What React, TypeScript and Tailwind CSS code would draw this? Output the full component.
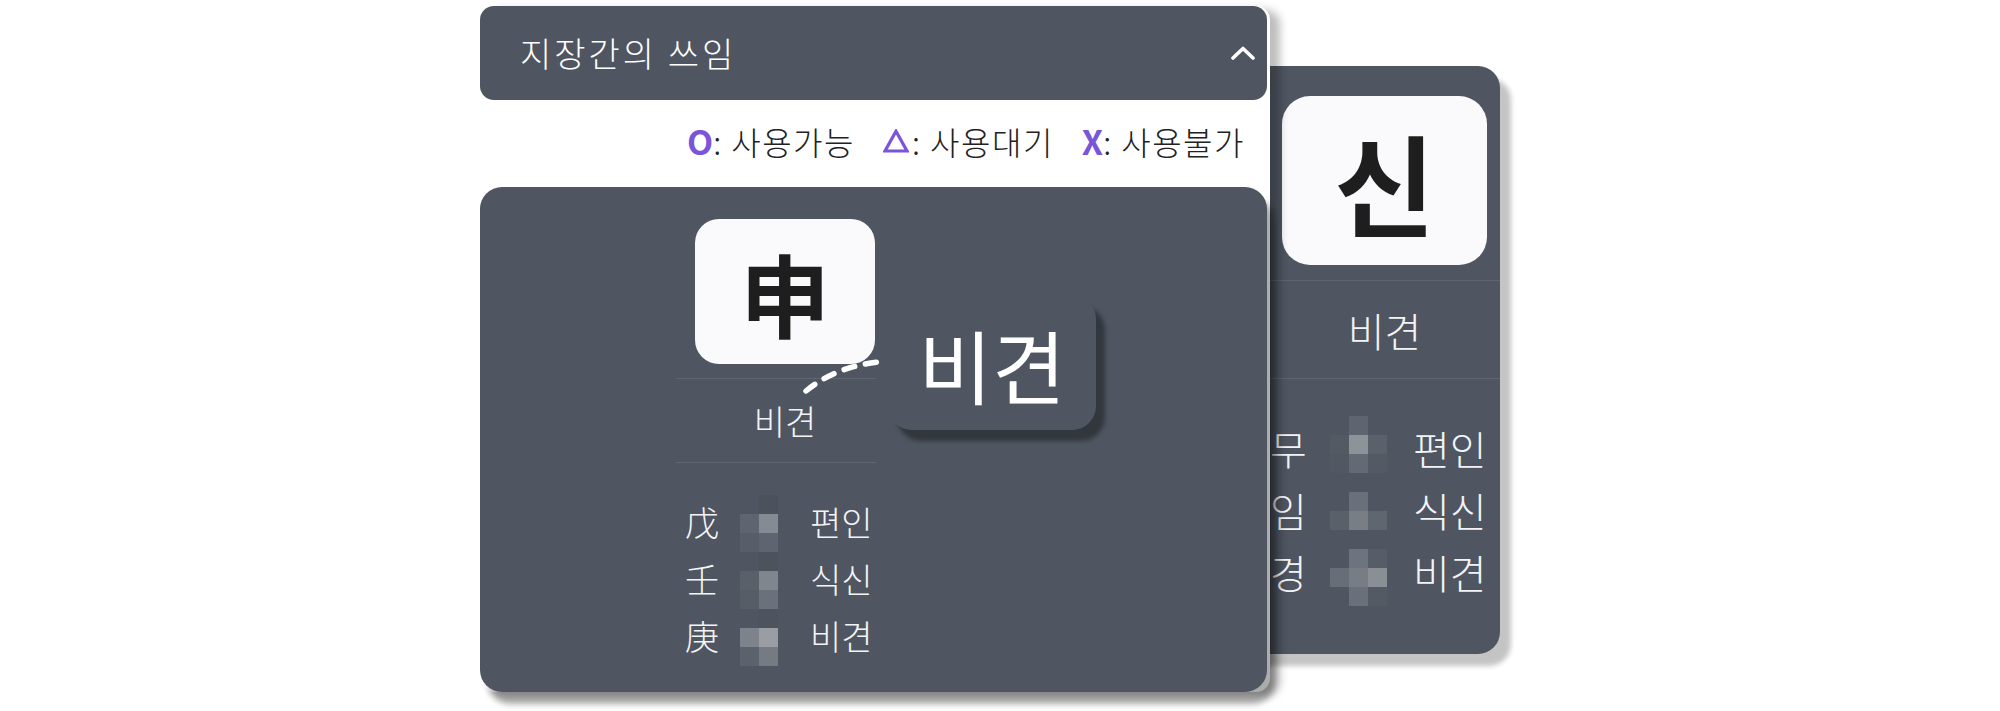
import React from "react";

type Cell = string | null;

const leftMosaic: Cell[][] = [
  [null, "#4b525c"],
  ["#5f6570", "#868b93"],
  ["#585e69", "#5f6570"],
  [null, "#4d535d"],
  ["#5a606a", "#80858e"],
  ["#575d67", "#6b717a"],
  [null, "#4d545e"],
  ["#7d828b", "#9a9ea4"],
  ["#5c626c", "#757a83"],
];

const rightMosaic: Cell[][] = [
  [null, "#5f6570", null],
  ["#535a64", "#8e939a", "#5b616b"],
  ["#525862", "#646a74", "#545a64"],
  [null, null, null],
  [null, "#6a707a", null],
  ["#5a606a", "#787d86", "#60666f"],
  [null, null, null],
  [null, "#6e747d", "#575d67"],
  ["#686e77", "#777c85", "#8a8f96"],
  [null, "#6a7079", "#545a63"],
];

function Mosaic({ data }: { data: Cell[][] }) {
  return (
    <div className="flex flex-col">
      {data.map((row, i) => (
        <div key={i} className="flex">
          {row.map((c, j) => (
            <div
              key={j}
              className="w-[19px] h-[19px]"
              style={{ backgroundColor: c ?? "transparent" }}
            />
          ))}
        </div>
      ))}
    </div>
  );
}

function Chevron() {
  return (
    <svg width="24" height="14" viewBox="0 0 24 14" fill="none">
      <polyline
        points="2,12 12,2.5 22,12"
        stroke="#ffffff"
        strokeWidth="3.6"
        strokeLinecap="round"
        strokeLinejoin="round"
      />
    </svg>
  );
}

function Triangle() {
  return (
    <svg width="26" height="24" viewBox="0 0 26 24" fill="none">
      <polygon
        points="13,2.2 24,22 2,22"
        stroke="#7b55d9"
        strokeWidth="3.2"
        strokeLinejoin="miter"
      />
    </svg>
  );
}

export default function App() {
  const leftRows = [
    ["戊", "편인"],
    ["壬", "식신"],
    ["庚", "비견"],
  ];
  const rightRows = [
    ["무", "편인"],
    ["임", "식신"],
    ["경", "비견"],
  ];
  return (
    <div className="w-[2000px] h-[711px] bg-white overflow-hidden font-['Noto_Sans_CJK_KR',sans-serif]">
      <div className="flex items-start pt-[6px] pl-[480px]">
        {/* Left main component */}
        <div className="relative z-10 w-[790px] pr-[3px] bg-white rounded-[14px] shadow-[10px_4px_8px_rgba(0,0,0,0.26)]">
          <div className="h-[94px] rounded-[14px] bg-[#4f5661] flex items-center justify-between pl-[40px] pr-[12px]">
            <span className="text-[34px] leading-none font-light tracking-[3px] text-white">지장간의 쓰임</span>
            <Chevron />
          </div>

          <div className="h-[87px] pb-[6px] flex items-center justify-end gap-[28px] pr-[22px] text-[32px] leading-none font-light tracking-[1.5px] text-[#222222]">
            <span className="flex items-center">
              <span className="text-[#7b55d9] font-bold text-[34px] tracking-normal">O</span>
              <span>: 사용가능</span>
            </span>
            <span className="flex items-center">
              <span className="mr-[3px] flex items-center">
                <Triangle />
              </span>
              <span>: 사용대기</span>
            </span>
            <span className="flex items-center">
              <span className="text-[#7b55d9] font-bold text-[34px] tracking-normal">X</span>
              <span>: 사용불가</span>
            </span>
          </div>

          <div className="relative h-[505px] rounded-[22px] bg-[#4f5661] shadow-[8px_12px_6px_rgba(0,0,0,0.33)] pt-[32px]">
            <div className="ml-[196px] w-[200px] flex flex-col">
              <div className="ml-[19px] w-[180px] h-[145px] rounded-[24px] bg-[#fafafc] flex items-center justify-center">
                <span className="text-[90px] leading-none font-bold text-[#1e1e1e]">申</span>
              </div>
              <div className="mt-[14px] h-[1px] bg-[#5f6670]" />
              <div className="h-[83px] flex items-center justify-center pl-[18px] text-[34px] leading-none font-light text-[#f3f4f6]">
                비견
              </div>
              <div className="h-[1px] bg-[#5f6670]" />
              <div className="mt-[30px] pl-[9px] flex items-start text-[34px] leading-none font-light text-[#f3f4f6]">
                <div className="w-[40px] flex flex-col">
                  {leftRows.map((r) => (
                    <div key={r[0]} className="h-[57px] flex items-center">
                      {r[0]}
                    </div>
                  ))}
                </div>
                <div className="ml-[15px] mt-[2px]">
                  <Mosaic data={leftMosaic} />
                </div>
                <div className="ml-[32px] flex flex-col">
                  {leftRows.map((r) => (
                    <div key={r[1]} className="h-[57px] flex items-center">
                      {r[1]}
                    </div>
                  ))}
                </div>
              </div>
            </div>

            {/* dashed connector */}
            <svg
              className="absolute left-0 top-0 pointer-events-none"
              width="500"
              height="260"
              viewBox="0 0 500 260"
              fill="none"
            >
              <path
                d="M 326 204 Q 355 180 398 175"
                stroke="#ffffff"
                strokeWidth="5.5"
                strokeLinecap="round"
                strokeDasharray="11 11"
              />
            </svg>

            {/* popup label */}
            <div className="absolute left-[408px] top-[108px] w-[208px] h-[135px] rounded-[24px] bg-[#4f5661] shadow-[9px_11px_4px_rgba(0,0,0,0.36)] flex items-center justify-center">
              <span className="text-[80px] leading-none font-normal text-white">비견</span>
            </div>
          </div>
        </div>

        {/* Right magnified panel */}
        <div className="mt-[60px] -ml-[92px] w-[322px] h-[588px] rounded-[22px] bg-[#4f5661] shadow-[11px_12px_5px_rgba(0,0,0,0.23)] flex flex-col">
          <div className="pl-[13px] pt-[30px] ml-[91px]">
            <div className="w-[205px] h-[169px] rounded-[28px] bg-[#fafafc] flex items-center justify-center">
              <span className="text-[110px] leading-none font-bold text-[#1e1e1e]">신</span>
            </div>
          </div>
          <div className="mt-[15px] h-[1px] bg-[#5f6670]" />
          <div className="ml-[91px] h-[97px] flex items-center justify-center text-[40px] leading-none font-light text-[#f3f4f6]">
            비견
          </div>
          <div className="h-[1px] bg-[#5f6670]" />
          <div className="ml-[92px] mt-[38px] flex items-start text-[40px] leading-none font-light text-[#f3f4f6]">
            <div className="w-[40px] flex flex-col">
              {rightRows.map((r) => (
                <div key={r[0]} className="h-[62px] flex items-center">
                  {r[0]}
                </div>
              ))}
            </div>
            <div className="ml-[20px] -mt-[1px]">
              <Mosaic data={rightMosaic} />
            </div>
            <div className="ml-[26px] flex flex-col">
              {rightRows.map((r) => (
                <div key={r[1]} className="h-[62px] flex items-center">
                  {r[1]}
                </div>
              ))}
            </div>
          </div>
        </div>
      </div>
    </div>
  );
}
